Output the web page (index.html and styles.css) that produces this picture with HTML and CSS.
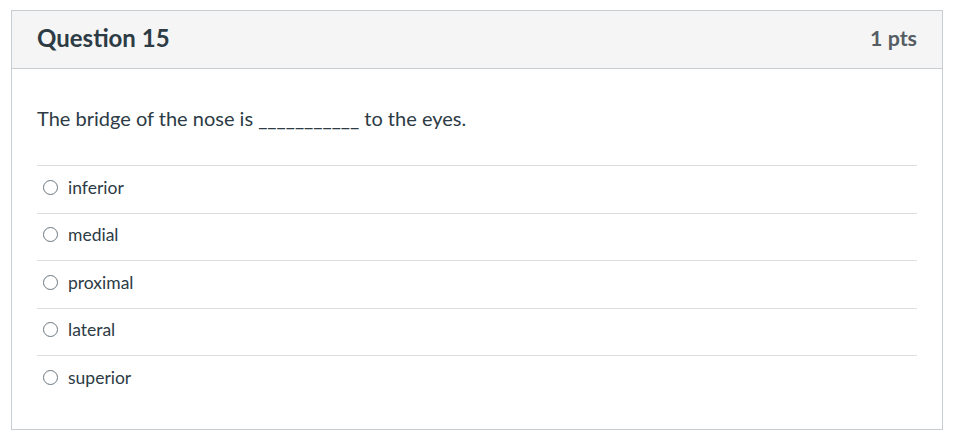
FILE: index.html
```html
<!DOCTYPE html>
<html>
<head>
<meta charset="utf-8">
<link rel="stylesheet" href="styles.css">
</head>
<body>
<div class="card">
  <div class="header">
    <h2 class="title">Question 15</h2>
    <div class="pts">1 pts</div>
  </div>
  <div class="content">
    <p class="question">The bridge of the nose is ___________ to the eyes.</p>
    <ul class="answers">
      <li class="answer"><span class="radio"></span><span class="label">inferior</span></li>
      <li class="answer"><span class="radio"></span><span class="label">medial</span></li>
      <li class="answer"><span class="radio"></span><span class="label">proximal</span></li>
      <li class="answer"><span class="radio"></span><span class="label">lateral</span></li>
      <li class="answer"><span class="radio"></span><span class="label">superior</span></li>
    </ul>
  </div>
</div>
</body>
</html>
```
FILE: styles.css
```css
html, body {
  margin: 0;
  padding: 0;
  background: #fff;
}
body {
  font-family: Lato, "Open Sans", sans-serif;
  color: #2d3b45;
  padding: 10px 11px 0 11px;
}
.card {
  border: 1px solid #c7cdd1;
  box-sizing: border-box;
  width: 932px;
}
.header {
  background: #f5f5f5;
  border-bottom: 1px solid #c7cdd1;
  height: 58px;
  box-sizing: border-box;
  display: flex;
  align-items: center;
  justify-content: space-between;
  padding: 0 25px 4px 25px;
}
.title {
  margin: 0;
  font-size: 24px;
  font-weight: 700;
  color: #2d3b45;
}
.pts {
  font-size: 21.4px;
  font-weight: 700;
  color: #565e63;
}
.content {
  padding: 35px 25px 26px 25px;
}
.question {
  margin: 0 0 33px 0;
  font-size: 20px;
  line-height: 28px;
}
.answers {
  list-style: none;
  margin: 0;
  padding: 0;
}
.answer {
  border-top: 1px solid #dcdfe1;
  height: 47.5px;
  box-sizing: border-box;
  display: flex;
  align-items: center;
  padding-left: 6px;
  padding-bottom: 4px;
  font-size: 17.5px;
}
.radio {
  width: 15px;
  height: 15px;
  border: 1px solid #6b7780;
  border-radius: 50%;
  box-sizing: border-box;
  margin-right: 10px;
  background: #fff;
}
.label {
  color: #2d3b45;
}
```
